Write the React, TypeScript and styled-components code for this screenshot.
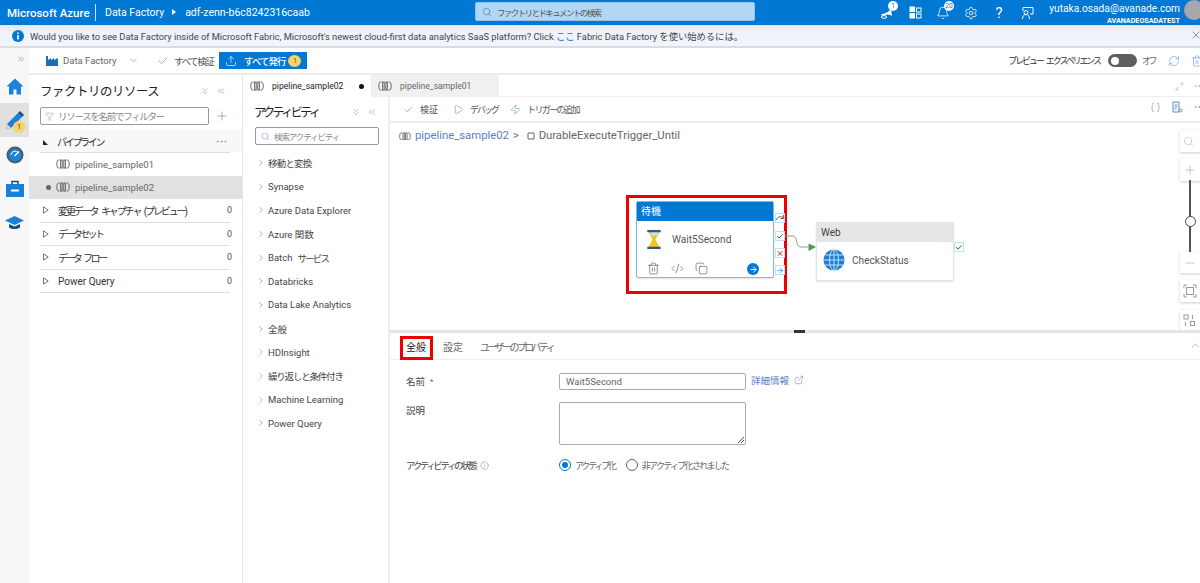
import React from "react";
import styled, { createGlobalStyle } from "styled-components";
import {
  X, ChevronDown, ChevronRight, ChevronUp, ChevronsDown, ChevronsLeft, ChevronsRight, Search, Filter, Plus, Minus,
  Check, Play, Zap, Braces, MoreHorizontal, Settings, Bell, RefreshCw, Trash2, Code2, Copy, ArrowRight, ExternalLink, Upload, Maximize2, Info,
} from "lucide-react";

const Global = createGlobalStyle`
  html, body { margin: 0; padding: 0; background: #fff; }
  * { box-sizing: border-box; }
  body { font-family: Roboto, "Noto Sans CJK JP", sans-serif; color: #323130; }
`;

const Ja = styled.span<{ $s: number }>`letter-spacing: ${p => p.$s}px; word-spacing: ${p => (p.$s < -1 ? 3 : 0)}px;`;

const Page = styled.div`width: 1200px; height: 583px; overflow: hidden; display: flex; flex-direction: column; position: relative;`;

const Header = styled.header`height: 25px; background: #0078d4; color: #fff; display: flex; align-items: center; position: relative; flex: none;`;
const Brand = styled.span`font-size: 11.5px; font-weight: 500; margin-left: 7px; width: 88px; white-space: nowrap;`;
const HeaderSep = styled.span`width: 1px; height: 17px; background: #cfe4f5;`;
const Crumb = styled.span`font-size: 10.5px; white-space: nowrap; margin-left: 9px;`;
const CrumbArrow = styled.span`width: 0; height: 0; border-left: 4px solid #fff; border-top: 3px solid transparent; border-bottom: 3px solid transparent; margin-left: 8px; margin-bottom: 2px;`;
const GlobalSearch = styled.div`position: absolute; left: 475px; top: 2px; width: 280px; height: 19px; background: #b3d7f2; border: 1px solid #8fc1ea; border-radius: 2px; display: flex; align-items: center; padding-left: 6px; gap: 5px; color: #555; font-size: 8.5px; white-space: nowrap;`;
const HeaderIcons = styled.div`position: absolute; left: 878px; top: 0; height: 25px; display: flex; align-items: center; gap: 10px;`;
const HeaderIcon = styled.span`position: relative; width: 18px; height: 18px; display: flex; align-items: center; justify-content: center;`;
const HeaderBadge = styled.span`position: absolute; right: -2px; top: -3px; width: 10px; height: 10px; background: #fff; color: #0078d4; border-radius: 50%; font-size: 6.5px; line-height: 10px; text-align: center;`;
const HelpMark = styled.span`font-size: 15px; line-height: 18px;`;
const Account = styled.div`position: absolute; left: 1040px; top: 3px; width: 140px; text-align: right; line-height: 1;`;
const Email = styled.div`font-size: 10.2px; white-space: nowrap; margin-top: 1px;`;
const Org = styled.div`font-size: 7.2px; font-weight: 700; margin-top: 3px;`;
const Avatar = styled.span`position: absolute; left: 1184px; top: 0; width: 20px; height: 20px; border-radius: 50%; background: #a8a8ac;`;

const Banner = styled.div`height: 23px; flex: none; background: linear-gradient(#e3e8f0, #eef3fc 40%, #f1f5fd); border-bottom: 2px solid #dcdcdc; display: flex; align-items: center; padding-left: 12px; gap: 6px; font-size: 9.3px; white-space: nowrap; color: #444; position: relative;`;
const BannerLink = styled.span`color: #2b6cc4;`;
const BannerClose = styled.span`position: absolute; right: -2px; top: 4px; color: #555; display: flex;`;

const Body = styled.div`flex: 1; display: flex; min-height: 0;`;
const Rail = styled.nav`width: 29px; flex: none; background: #f7f7f7; display: flex; flex-direction: column; position: relative;`;
const RailExpand = styled.div`height: 22px; display: flex; justify-content: flex-end; align-items: center; padding-right: 3px; color: #666;`;
const RailItem = styled.div<{ $active?: boolean; $h: number }>`height: ${p => p.$h}px; display: flex; align-items: center; justify-content: center; background: ${p => (p.$active ? "#e0e0e0" : "transparent")}; position: relative;`;
const RailBadge = styled.span`position: absolute; left: 13px; top: 18px; width: 12px; height: 12px; border-radius: 50%; background: #f6d365; font-size: 7px; line-height: 12px; text-align: center; color: #444;`;

const Content = styled.div`flex: 1; min-width: 0; display: flex; flex-direction: column;`;
const TopBar = styled.div`height: 27px; flex: none; border-bottom: 2px solid #ececec; display: flex; align-items: center; position: relative; padding-left: 17px;`;
const FactoryLabel = styled.span`font-size: 9.5px; color: #666; margin-left: 5px; width: 65px; white-space: nowrap;`;
const ChevronSlot = styled.span`display: flex; margin-right: 18px; color: #777;`;
const ValidateAll = styled.span`font-size: 9.5px; color: #555; margin-left: 5px; width: 40px; white-space: nowrap;`;
const PublishButton = styled.div`height: 17px; width: 88px; background: #0078d4; color: #fff; display: flex; align-items: center; font-size: 9.5px; font-weight: 500; padding-left: 6px; gap: 7px; margin-left: 5px; white-space: nowrap;`;
const PublishBadge = styled.span`width: 13px; height: 12px; border-radius: 50%; background: #f6d365; color: #555; font-size: 7px; line-height: 12px; text-align: center; font-weight: 400; margin-left: -4px;`;
const Preview = styled.div`position: absolute; right: -3px; top: 0; height: 25px; display: flex; align-items: center; font-size: 9px; color: #333; white-space: nowrap;`;
const Toggle = styled.span`width: 29px; height: 13px; border-radius: 7px; background: #605e5c; margin-left: 8px; display: flex; align-items: center; padding-left: 3px;`;
const ToggleKnob = styled.span`width: 8px; height: 8px; border-radius: 50%; background: #fff;`;
const PreviewOff = styled.span`margin-left: 5px; margin-right: 13px; color: #666; width: 13px;`;
const PreviewTools = styled.span`display: flex; gap: 11px; color: #6a94c8;`;

const Workspace = styled.div`flex: 1; display: flex; min-height: 0;`;
const ResourcePanel = styled.aside`width: 214px; flex: none; border-right: 1px solid #e8e8e8; display: flex; flex-direction: column;`;
const PanelHead = styled.div<{ $pad: number; $h: number }>`height: ${p => p.$h}px; display: flex; align-items: center; justify-content: space-between; padding: 0 ${p => p.$pad}px 0 11px; flex: none;`;
const PanelTitle = styled.h2`font-size: 12.4px; font-weight: 400; margin: 0; color: #222; white-space: nowrap;`;
const PanelTools = styled.span`display: flex; gap: 6px; color: #777;`;
const FilterRow = styled.div`display: flex; align-items: center; padding-left: 11px; gap: 6px; height: 18px; flex: none;`;
const FilterBox = styled.div`width: 169px; height: 18px; border: 1px solid #999; border-radius: 2px; display: flex; align-items: center; padding-left: 4px; gap: 4px; font-size: 9.5px; color: #888; white-space: nowrap;`;
const SectionRow = styled.div`height: 22px; margin-top: 5px; background: #f8f8f8; display: flex; align-items: center; padding: 0 14px 0 14px; font-size: 10px; color: #333; flex: none; position: relative;`;
const Wedge = styled.span`width: 0; height: 0; border-left: 5px solid #222; border-top: 5px solid transparent; margin-right: 9px; margin-top: 2px;`;
const SectionLine = styled.div`height: 1px; background: #ddd; margin: 0 12px 0 11px; flex: none;`;
const More = styled.span`margin-left: auto; color: #5b8ec5; display: flex;`;
const PipeRow = styled.div<{ $active?: boolean }>`height: 23px; flex: none; display: flex; align-items: center; padding-left: 17px; font-size: 9.5px; color: #666; background: ${p => (p.$active ? "#e1e1e1" : "transparent")}; gap: 5px;`;
const PipeDot = styled.span<{ $show?: boolean }>`width: 5px; height: 5px; border-radius: 50%; background: ${p => (p.$show ? "#666" : "transparent")};`;
const TreeRow = styled.div`height: 23.6px; margin: 0 12px 0 11px; flex: none; border-bottom: 1px solid #ddd; display: flex; align-items: center; padding-left: 3px; font-size: 10px; color: #333; white-space: nowrap;`;
const TreeWedge = styled.svg`margin-right: 9px; flex: none;`;
const Count = styled.span`margin-left: auto; margin-right: -2px; font-size: 9px; color: #555;`;

const Main = styled.div`flex: 1; min-width: 0; display: flex; flex-direction: column;`;
const TabBar = styled.div`height: 22px; flex: none; display: flex; position: relative; border-bottom: 1px solid #eee;`;
const DocTab = styled.div<{ $active?: boolean }>`width: 128px; height: 22px; display: flex; align-items: center; padding-left: 7px; gap: 8px; font-size: 8.6px; color: ${p => (p.$active ? "#222" : "#666")}; background: ${p => (p.$active ? "#fff" : "#f0f0f0")};`;
const TabDot = styled.span`width: 5px; height: 5px; border-radius: 50%; background: #111; margin-left: 8px;`;
const TabTools = styled.div`position: absolute; right: -5px; top: 2px; display: flex; gap: 9px; color: #8aa; align-items: center; height: 18px;`;

const Editor = styled.div`flex: 1; display: flex; min-height: 0;`;
const ActivityPanel = styled.aside`width: 147px; flex: none; border-right: 2px solid #eee;`;
const ActivitySearch = styled.div`margin-left: 12px; width: 124px; height: 18px; border: 1px solid #999; border-radius: 2px; display: flex; align-items: center; padding-left: 5px; gap: 4px; font-size: 8.5px; color: #888;`;
const ActivityList = styled.ul`list-style: none; margin: 6px 0 0; padding: 0;`;
const ActivityItem = styled.li`height: 23.7px; display: flex; align-items: center; padding-left: 13px; gap: 2px; font-size: 9.5px; color: #444; white-space: nowrap;`;
const Latin = styled.span`margin-right: 3px;`;

const Designer = styled.div`flex: 1; min-width: 0; display: flex; flex-direction: column;`;
const CanvasBar = styled.div`height: 26px; flex: none; border-bottom: 2px solid #eee; display: flex; align-items: center; padding-left: 13px; position: relative; font-size: 9px; color: #555; white-space: nowrap;`;
const BarAction = styled.span<{ $w: number }>`width: ${p => p.$w}px; display: flex; align-items: center; gap: 6px;`;
const BarRight = styled.span`position: absolute; right: -5px; top: 4px; display: flex; gap: 10px; color: #5b8ec5; align-items: center;`;

const Canvas = styled.div`height: 207px; flex: none; position: relative; overflow: hidden;`;
const Breadcrumb = styled.div`position: absolute; left: 9px; top: 5px; display: flex; align-items: center; font-size: 11.3px; white-space: nowrap; color: #666; gap: 4px; line-height: 16px;`;
const BreadLink = styled.span`color: #5a80bf;`;
const Highlight = styled.div`position: absolute; left: 236px; top: 72px; width: 161px; height: 99px; border: 3px solid #e00;`;
const Node = styled.div<{ $x: number; $y: number; $h: number; $active?: boolean }>`position: absolute; left: ${p => p.$x}px; top: ${p => p.$y}px; width: 138px; height: ${p => p.$h}px; background: #fff; border: 1px solid ${p => (p.$active ? "#7db8e8" : "#e4e4e4")}; border-radius: 2px; box-shadow: 0 1px 2px rgba(0,0,0,.12);`;
const NodeHead = styled.div<{ $active?: boolean }>`height: 19px; background: ${p => (p.$active ? "#0078d4" : "#e6e6e6")}; color: ${p => (p.$active ? "#fff" : "#444")}; font-size: 10px; padding-left: 4px; line-height: 20px;`;
const NodeBody = styled.div<{ $pad: number; $gap: number }>`display: flex; align-items: center; gap: ${p => p.$gap}px; padding: ${p => p.$pad}px 0 0 ${p => (p.$gap === 10 ? 9 : 6)}px; font-size: 10.1px; color: #555;`;
const NodeTools = styled.div`display: flex; align-items: center; gap: 11px; color: #555; padding: 12px 0 0 10px; position: relative;`;
const GoButton = styled.span`position: absolute; left: 110px; top: 13px; width: 12px; height: 12px; border-radius: 50%; background: #0078d4; color: #fff; display: flex; align-items: center; justify-content: center;`;
const Port = styled.span<{ $x: number; $y: number }>`position: absolute; left: ${p => p.$x}px; top: ${p => p.$y}px; width: 10px; height: 10px; background: #fff; border: 1px solid #c5dff5; display: flex; align-items: center; justify-content: center;`;
const Link = styled.svg`position: absolute; left: 385px; top: 105px;`;
const ZoomBox = styled.div<{ $y: number; $h: number }>`position: absolute; left: 790px; top: ${p => p.$y}px; width: 24px; height: ${p => p.$h}px; background: #fff; box-shadow: 0 1px 3px rgba(0,0,0,.2); display: flex; align-items: center; padding-left: 3px; color: #aaa;`;
const SliderTrack = styled.div`position: absolute; left: 799px; top: 57px; width: 2px; height: 72px; background: #555;`;
const SliderKnob = styled.div`position: absolute; left: 795px; top: 93px; width: 11px; height: 11px; border-radius: 50%; border: 1.5px solid #444; background: #fff;`;

const Splitter = styled.div`height: 3px; flex: none; background: #e4e4e4; position: relative;`;
const SplitHandle = styled.span`position: absolute; left: 404px; top: 0; width: 11px; height: 3px; background: #333;`;

const Props = styled.section`flex: 1; display: flex; flex-direction: column; min-height: 0;`;
const PropTabs = styled.div`height: 27px; flex: none; border-bottom: 1px solid #eee; display: flex; align-items: center; padding-left: 16px; font-size: 10px; color: #666; gap: 17px; position: relative;`;
const PropTab = styled.span<{ $active?: boolean }>`color: ${p => (p.$active ? "#222" : "#666")}; position: relative; white-space: nowrap;`;
const TabFrame = styled.span`position: absolute; left: -6px; top: -3px; width: 33px; height: 24px; border: 3px solid #e00;`;
const Collapse = styled.span`position: absolute; right: -2px; top: 6px; color: #888; display: flex;`;
const Form = styled.div`display: grid; grid-template-columns: 153px 187px auto; padding: 13px 0 0 16px; row-gap: 12px; align-items: start; font-size: 9.5px; color: #444;`;
const FieldLabel = styled.label`display: flex; align-items: center; gap: 5px; height: 16px; white-space: nowrap;`;
const Req = styled.span`color: #d13438; font-size: 8px;`;
const TextBox = styled.div`height: 17px; border: 1px solid #aaa; border-radius: 2px; padding-left: 6px; font-size: 9.5px; line-height: 15px; color: #666;`;
const TextArea = styled.div`height: 43px; border: 1px solid #aaa; border-radius: 2px; position: relative;`;
const Grip = styled.svg`position: absolute; right: 1px; bottom: 1px;`;
const MoreLink = styled.span`display: flex; align-items: center; gap: 5px; color: #5a80bf; margin-left: 5px; font-size: 9.5px; height: 14px;`;
const Radios = styled.div`display: flex; align-items: center; gap: 4px; height: 16px; grid-column: 2 / 4; white-space: nowrap; color: #666; font-size: 9px;`;
const Radio = styled.span<{ $on?: boolean }>`width: 12px; height: 12px; border-radius: 50%; border: 1px solid ${p => (p.$on ? "#0078d4" : "#666")}; display: flex; align-items: center; justify-content: center; &::after { content: ""; width: 6px; height: 6px; border-radius: 50%; background: ${p => (p.$on ? "#0078d4" : "transparent")}; }`;
const RadioGap = styled.span`width: 3px;`;

const PipeIcon = ({ c = "#666", s = 14 }: { c?: string; s?: number }) => (
  <svg width={s} height={s * 0.72} viewBox="0 0 14 10" fill="none" stroke={c} strokeWidth="1">
    <path d="M3.500 1H2.500C1.500 1 .8 2.500 .8 5s.7 4 1.700 4h1M10.500 1h1c1 0 1.700 1.500 1.700 4s-.7 4-1.700 4h-1" />
    <rect x="4.600" y="1" width="1.600" height="8" /><rect x="7.800" y="1" width="1.600" height="8" />
  </svg>
);

const Hourglass = () => (
  <svg width="16" height="21" viewBox="0 0 16 22">
    <path d="M2 3h12l-4.500 8L14 19H2l4.500-8z" fill="#f5c518" />
    <path d="M3 3h10l-2.500 4h-5z" fill="#bfe3f7" />
    <rect x="1" y="1" width="14" height="2.400" fill="#2b5a84" /><rect x="1" y="18.600" width="14" height="2.400" fill="#2b5a84" />
  </svg>
);

const Earth = () => (
  <svg width="22" height="22" viewBox="0 0 22 22" fill="none">
    <circle cx="11" cy="11" r="10.500" fill="#1c7fd6" />
    <g stroke="#d6ebfb" strokeWidth=".9"><ellipse cx="11" cy="11" rx="4.500" ry="10.500" /><path d="M11 .5v21M.5 11h21M2 6h18M2 16h18" /></g>
  </svg>
);

const InfoDot = () => (
  <svg width="12" height="12" viewBox="0 0 12 12"><circle cx="6" cy="6" r="6" fill="#0078d4" /><path d="M5.200 5h1.600v4.500H5.200zM5.200 2.500h1.600v1.500H5.200z" fill="#fff" /></svg>
);

const activities: [string, string, number][] = [["", "移動と変換", -0.8], ["", "Synapse", 0], ["", "Azure Data Explorer", 0], ["", "Azure 関数", 0], ["Batch", "サービス", -1.8], ["", "Databricks", 0], ["", "Data Lake Analytics", 0], ["", "全般", 0], ["", "HDInsight", 0], ["", "繰り返しと条件付き", -1.2], ["", "Machine Learning", 0], ["", "Power Query", 0]];
const trees: [string, number][] = [["変更データ キャプチャ (プレビュー)", -2.1], ["データセット", -2.6], ["データ フロー", -2.6], ["Power Query", 0]];

export default function App() {
  return (
    <Page>
      <Global />
      <Header>
        <Brand>Microsoft Azure</Brand>
        <HeaderSep />
        <Crumb>Data Factory</Crumb>
        <CrumbArrow />
        <Crumb>adf-zenn-b6c8242316caab</Crumb>
        <GlobalSearch><Search size={10} strokeWidth={1.5} color="#3f78ad" /><Ja $s={-1.6}>ファクトリとドキュメントの検索</Ja></GlobalSearch>
        <HeaderIcons>
          <HeaderIcon><svg width="15" height="13" viewBox="0 0 15 13" fill="#fff"><path d="M1 8c3 0 8-2 10-5l1 7c-3-2-7-1-10 0z" /><ellipse cx="4" cy="11" rx="2.600" ry="1.400" fill="none" stroke="#fff" /></svg><HeaderBadge>1</HeaderBadge></HeaderIcon>
          <HeaderIcon><svg width="13" height="13" viewBox="0 0 13 13" fill="none" stroke="#fff"><rect x="1" y="1" width="4.500" height="4.500" fill="#fff" /><rect x="1" y="7.500" width="4.500" height="4.500" fill="#fff" /><rect x="7.500" y="2" width="4.500" height="4" /><rect x="7.500" y="8" width="4.500" height="4" /></svg></HeaderIcon>
          <HeaderIcon><Bell size={14} strokeWidth={1.4} /><HeaderBadge>20</HeaderBadge></HeaderIcon>
          <HeaderIcon><Settings size={14} strokeWidth={1.4} /></HeaderIcon>
          <HeaderIcon><HelpMark>?</HelpMark></HeaderIcon>
          <HeaderIcon><svg width="14" height="14" viewBox="0 0 14 14" fill="none" stroke="#fff"><path d="M3 5V1.500h10V8h-3" /><circle cx="6" cy="6.500" r="2" /><path d="M2.500 13c0-3 1.500-4.500 3.500-4.500S9.500 10 9.500 13" /></svg></HeaderIcon>
        </HeaderIcons>
        <Account><Email>yutaka.osada@avanade.com</Email><Org>AVANADEOSADATEST</Org></Account>
        <Avatar />
      </Header>
      <Banner>
        <InfoDot />
        <span>Would you like to see Data Factory inside of Microsoft Fabric, Microsoft's newest cloud-first data analytics SaaS platform? Click <BannerLink>ここ</BannerLink> Fabric Data Factory を使い始めるには。</span>
        <BannerClose><X size={12} strokeWidth={1.2} /></BannerClose>
      </Banner>
      <Body>
        <Rail>
          <RailExpand><ChevronsRight size={10} strokeWidth={1.2} /></RailExpand>
          <RailItem $h={33}>
            <svg width="18" height="17" viewBox="0 0 18 17"><path d="M9 .5L.5 8.500h2.500V16.500h4.500v-5h3v5H15V8.500h2.500z" fill="#1c84d8" /></svg>
          </RailItem>
          <RailItem $h={34} $active>
            <svg width="20" height="20" viewBox="0 0 20 20"><path d="M2 14L13 3l4 4L6 18l-5 1z" fill="#1c7fd6" /><path d="M13 3l2-2 4 4-2 2z" fill="#174f80" /><path d="M1 19l1-5 4 4z" fill="#f3d9a8" /></svg>
            <RailBadge>1</RailBadge>
          </RailItem>
          <RailItem $h={35}>
            <svg width="18" height="18" viewBox="0 0 18 18"><circle cx="9" cy="9" r="8.500" fill="#4a5a68" /><circle cx="9" cy="9" r="6.500" fill="#1c84d8" /><path d="M5 9a4 4 0 0 1 7-2.500" stroke="#fff" fill="none" /><path d="M8.500 10L13 5.500" stroke="#fff" strokeWidth="1.300" /></svg>
          </RailItem>
          <RailItem $h={32}>
            <svg width="18" height="17" viewBox="0 0 18 17"><path d="M6 4V1.500h6V4" fill="none" stroke="#174f80" strokeWidth="1.500" /><rect y="4" width="18" height="13" fill="#1c7fd6" /><path d="M5 10.500h8" stroke="#fff" strokeWidth="2" /></svg>
          </RailItem>
          <RailItem $h={36}>
            <svg width="19" height="15" viewBox="0 0 19 15"><path d="M9.500 1L19 5.500 9.500 10 0 5.500z" fill="#1c7fd6" /><path d="M4 9v3.500c3 2 8 2 11 0V9l-5.500 2.500z" fill="#174f80" /></svg>
          </RailItem>
        </Rail>
        <Content>
          <TopBar>
            <svg width="12" height="11" viewBox="0 0 12 11"><path d="M0 11V1h2v4l3-2v2l3-2v2l4-2v8z" fill="#1b6fb5" /></svg>
            <FactoryLabel>Data Factory</FactoryLabel>
            <ChevronSlot><ChevronDown size={11} strokeWidth={1.2} /></ChevronSlot>
            <Check size={12} color="#5b8ec5" strokeWidth={1.3} />
            <ValidateAll><Ja $s={-1.4}>すべて検証</Ja></ValidateAll>
            <PublishButton><Upload size={12} strokeWidth={1.3} /><Ja $s={-1}>すべて発行</Ja><PublishBadge>1</PublishBadge></PublishButton>
            <Preview>
              <Ja $s={-2.1}>プレビュー エクスペリエンス</Ja><Toggle><ToggleKnob /></Toggle><PreviewOff><Ja $s={-2.5}>オフ</Ja></PreviewOff>
              <PreviewTools><RefreshCw size={12} strokeWidth={1.2} /><Trash2 size={12} strokeWidth={1.2} /></PreviewTools>
            </Preview>
          </TopBar>
          <Workspace>
            <ResourcePanel>
              <PanelHead $pad={16} $h={32}>
                <PanelTitle><Ja $s={-0.4}>ファクトリのリソース</Ja></PanelTitle>
                <PanelTools><ChevronsDown size={10} strokeWidth={1.2} /><ChevronsLeft size={10} strokeWidth={1.2} /></PanelTools>
              </PanelHead>
              <FilterRow>
                <FilterBox><Filter size={9} color="#6a94c8" strokeWidth={1.3} /><Ja $s={-1.3}>リソースを名前でフィルター</Ja></FilterBox>
                <Plus size={14} color="#6a94c8" strokeWidth={1.2} />
              </FilterRow>
              <SectionRow><Wedge /><Ja $s={-2.3}>パイプライン</Ja><More><MoreHorizontal size={13} strokeWidth={1.2} /></More></SectionRow>
              <SectionLine />
              <PipeRow><PipeDot /><PipeIcon />pipeline_sample01</PipeRow>
              <PipeRow $active><PipeDot $show /><PipeIcon />pipeline_sample02</PipeRow>
              {trees.map(([t, s]) => (
                <TreeRow key={t}>
                  <TreeWedge width="6" height="8" viewBox="0 0 6 8"><path d="M.5.8L5.200 4 .5 7.200z" fill="#fff" stroke="#777" /></TreeWedge>
                  <Ja $s={s}>{t}</Ja><Count>0</Count>
                </TreeRow>
              ))}
            </ResourcePanel>
            <Main>
              <TabBar>
                <DocTab $active><PipeIcon />pipeline_sample02<TabDot /></DocTab>
                <DocTab><PipeIcon />pipeline_sample01</DocTab>
                <TabTools><Maximize2 size={9} strokeWidth={1.2} /><MoreHorizontal size={12} strokeWidth={1.2} /></TabTools>
              </TabBar>
              <Editor>
                <ActivityPanel>
                  <PanelHead $pad={11} $h={30}>
                    <PanelTitle><Ja $s={-2.9}>アクティビティ</Ja></PanelTitle>
                    <PanelTools><ChevronsDown size={10} strokeWidth={1.2} /><ChevronsLeft size={10} strokeWidth={1.2} /></PanelTools>
                  </PanelHead>
                  <ActivitySearch><Search size={9} color="#6a94c8" strokeWidth={1.3} /><Ja $s={-1.1}>検索アクティビティ</Ja></ActivitySearch>
                  <ActivityList>
                    {activities.map(([l, a, s]) => (
                      <ActivityItem key={a}><ChevronRight size={10} color="#666" strokeWidth={1.2} />{l && <Latin>{l}</Latin>}<Ja $s={s}>{a}</Ja></ActivityItem>
                    ))}
                  </ActivityList>
                </ActivityPanel>
                <Designer>
                  <CanvasBar>
                    <BarAction $w={50}><Check size={11} color="#5b8ec5" strokeWidth={1.3} />検証</BarAction>
                    <BarAction $w={57}><Play size={11} color="#5b8ec5" strokeWidth={1.2} /><Ja $s={-2}>デバッグ</Ja></BarAction>
                    <BarAction $w={80}><Zap size={11} color="#5b8ec5" strokeWidth={1.2} /><Ja $s={-1.6}>トリガーの追加</Ja></BarAction>
                    <BarRight><Braces size={11} strokeWidth={1.2} /><svg width="12" height="12" viewBox="0 0 12 12" fill="none" stroke="#5b8ec5"><path d="M2 1h6v10H2zM3.500 4h3M3.500 6h3M3.500 8h2" /><circle cx="9.500" cy="9.500" r="1.500" /></svg><MoreHorizontal size={12} strokeWidth={1.2} /></BarRight>
                  </CanvasBar>
                  <Canvas>
                    <Breadcrumb>
                      <PipeIcon s={12} /><BreadLink>pipeline_sample02</BreadLink>&gt;&nbsp;
                      <svg width="9" height="9" viewBox="0 0 9 9" fill="none" stroke="#666"><path d="M2 1h6v6H2z" /></svg>DurableExecuteTrigger_Until
                    </Breadcrumb>
                    <Highlight />
                    <Node $x={246} $y={78} $h={77} $active>
                      <NodeHead $active>待機</NodeHead>
                      <NodeBody $pad={8} $gap={10}><Hourglass />Wait5Second</NodeBody>
                      <NodeTools>
                        <Trash2 size={13} strokeWidth={1.2} /><Code2 size={13} strokeWidth={1.2} /><Copy size={13} strokeWidth={1.2} />
                        <GoButton><ArrowRight size={9} strokeWidth={2.5} /></GoButton>
                      </NodeTools>
                    </Node>
                    <Port $x={385} $y={90}><svg width="8" height="6" viewBox="0 0 8 6" fill="none" stroke="#666"><path d="M.5 5C1 2 4 .8 7 2.500M7.500 0v3.500H4.500" /></svg></Port>
                    <Port $x={385} $y={108}><Check size={9} color="#107c10" strokeWidth={3} /></Port>
                    <Port $x={385} $y={125}><X size={9} color="#c4262e" strokeWidth={3} /></Port>
                    <Port $x={385} $y={142}><ArrowRight size={9} color="#2b88d8" strokeWidth={2} /></Port>
                    <Link width="45" height="30" viewBox="0 0 45 30"><path d="M10 8h8c5 0 2 11 8 11h7" stroke="#7aa87a" fill="none" /><path d="M33.500 15.500L41 19l-7.500 4z" fill="#4c9a4c" /></Link>
                    <Node $x={426} $y={99} $h={59}>
                      <NodeHead>Web</NodeHead>
                      <NodeBody $pad={7} $gap={7}><Earth />CheckStatus</NodeBody>
                    </Node>
                    <Port $x={564} $y={119}><Check size={9} color="#107c10" strokeWidth={3} /></Port>
                    <ZoomBox $y={7} $h={22}><Search size={11} strokeWidth={1.1} /></ZoomBox>
                    <ZoomBox $y={36} $h={22}><Plus size={14} strokeWidth={1.1} /></ZoomBox>
                    <SliderTrack /><SliderKnob />
                    <ZoomBox $y={129} $h={21}><Minus size={14} strokeWidth={1.1} /></ZoomBox>
                    <ZoomBox $y={157} $h={22}><svg width="14" height="14" viewBox="0 0 14 14" fill="none" stroke="#999"><path d="M1 4V1h3M10 1h3v3M13 10v3h-3M4 13H1v-3" /><rect x="3.500" y="3.500" width="7" height="7" /></svg></ZoomBox>
                    <ZoomBox $y={187} $h={20}><svg width="13" height="13" viewBox="0 0 13 13" fill="none" stroke="#999"><rect x="1" y="1" width="4" height="4" /><rect x="7.500" y="7.500" width="4" height="4" /><path d="M9.500 5V1M2.500 8v4" /></svg></ZoomBox>
                  </Canvas>
                  <Splitter><SplitHandle /></Splitter>
                  <Props>
                    <PropTabs>
                      <PropTab $active>全般<TabFrame /></PropTab>
                      <PropTab>設定</PropTab>
                      <PropTab><Ja $s={-2.6}>ユーザーのプロパティ</Ja></PropTab>
                      <Collapse><ChevronUp size={13} strokeWidth={1.1} /></Collapse>
                    </PropTabs>
                    <Form>
                      <FieldLabel>名前 <Req>*</Req></FieldLabel>
                      <TextBox>Wait5Second</TextBox>
                      <MoreLink>詳細情報 <ExternalLink size={10} strokeWidth={1.2} /></MoreLink>
                      <FieldLabel>説明</FieldLabel>
                      <TextArea><Grip width="7" height="7" viewBox="0 0 7 7" stroke="#555"><path d="M1 7L7 1M4 7l3-3" /></Grip></TextArea>
                      <span />
                      <FieldLabel><Ja $s={-2.4}>アクティビティの状態</Ja> <Info size={9} color="#777" strokeWidth={1.2} /></FieldLabel>
                      <Radios><Radio $on /><Ja $s={-2.2}>アクティブ化</Ja><RadioGap /><Radio /><Ja $s={-1.7}>非アクティブ化されました</Ja></Radios>
                    </Form>
                  </Props>
                </Designer>
              </Editor>
            </Main>
          </Workspace>
        </Content>
      </Body>
    </Page>
  );
}
